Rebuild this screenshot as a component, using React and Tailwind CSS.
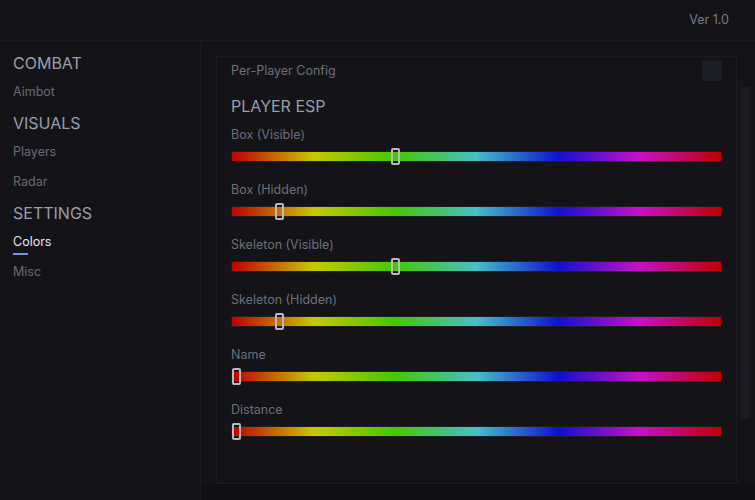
import React from "react";

const rows = [
  { label: "Box (Visible)", pos: 160 },
  { label: "Box (Hidden)", pos: 44 },
  { label: "Skeleton (Visible)", pos: 160 },
  { label: "Skeleton (Hidden)", pos: 44 },
  { label: "Name", pos: 1 },
  { label: "Distance", pos: 1 },
];

function Slider({ label, pos, first }) {
  return (
    <div className={first ? "flex flex-col mt-[11px]" : "flex flex-col mt-[20px]"}>
      <div className="text-[12.5px] leading-[16px] text-[#6c6f7d]">{label}</div>
      <div className="relative mt-[8px] h-[11px] w-[491px] border border-[#1e1e24] bg-[linear-gradient(to_right,#c00000_0%,#c8c800_16.7%,#44c800_33.3%,#44c0c8_50%,#1010d0_66.7%,#c810c8_83.3%,#c00000_100%)]">
        <div
          className="absolute top-[-4px] h-[17px] w-[9px] rounded-[2px] border-2 border-[#b9b9be]"
          style={{ left: pos - 1 }}
        />
      </div>
    </div>
  );
}

export default function App() {
  return (
    <div
      className="w-[755px] h-[500px] bg-[#131318] flex flex-col overflow-hidden"
      style={{ fontFamily: "Inter, 'Noto Sans', sans-serif" }}
    >
      <header className="h-[41px] shrink-0 border-b border-[#1b1b21] flex items-center justify-end pr-[26px]">
        <span className="text-[12.5px] text-[#777a88]">Ver 1.0</span>
      </header>
      <div className="flex flex-1 min-h-0">
        <aside className="w-[201px] shrink-0 border-r border-[#1a1a20] pl-[13px] pt-[12px] flex flex-col">
          <div className="text-[16px] leading-[20px] text-[#9c9eac]">COMBAT</div>
          <div className="mt-[11px] text-[12.5px] leading-[16px] text-[#676a78]">Aimbot</div>
          <div className="mt-[13px] text-[16px] leading-[20px] text-[#9c9eac]">VISUALS</div>
          <div className="mt-[11px] text-[12.5px] leading-[16px] text-[#676a78]">Players</div>
          <div className="mt-[14px] text-[12.5px] leading-[16px] text-[#676a78]">Radar</div>
          <div className="mt-[13px] text-[16px] leading-[20px] text-[#9c9eac]">SETTINGS</div>
          <div className="mt-[11px] text-[12.5px] leading-[16px] text-[#e6e6ee]">Colors</div>
          <div className="mt-[3px] h-[2px] w-[15px] bg-[#7d8cf5]" />
          <div className="mt-[9px] text-[12.5px] leading-[16px] text-[#676a78]">Misc</div>
        </aside>
        <main className="flex-1 flex flex-col min-w-0">
          <div className="flex flex-1 pl-[15px] pt-[15px]">
            <section className="w-[521px] h-[428px] border border-[#1b1b21] bg-[#131318] px-[14px] pt-[4px] flex flex-col">
              <div className="flex items-center justify-between h-[20px]">
                <span className="text-[12.5px] leading-[16px] text-[#6c6f7d]">Per-Player Config</span>
                <div className="w-[20px] h-[20px] bg-[#1c1f27]" />
              </div>
              <div className="mt-[15px] text-[16px] leading-[20px] text-[#9a9dab]">PLAYER ESP</div>
              {rows.map((r, i) => (
                <Slider key={r.label} label={r.label} pos={r.pos} first={i === 0} />
              ))}
            </section>
            <div className="ml-[4px] w-[9px] h-[428px] bg-[#121217] flex flex-col">
              <div className="mt-[31px] h-[332px] bg-[#1b1c23]" />
            </div>
          </div>
          <div className="h-[16px] shrink-0 bg-[#0f1014]" />
        </main>
      </div>
    </div>
  );
}
